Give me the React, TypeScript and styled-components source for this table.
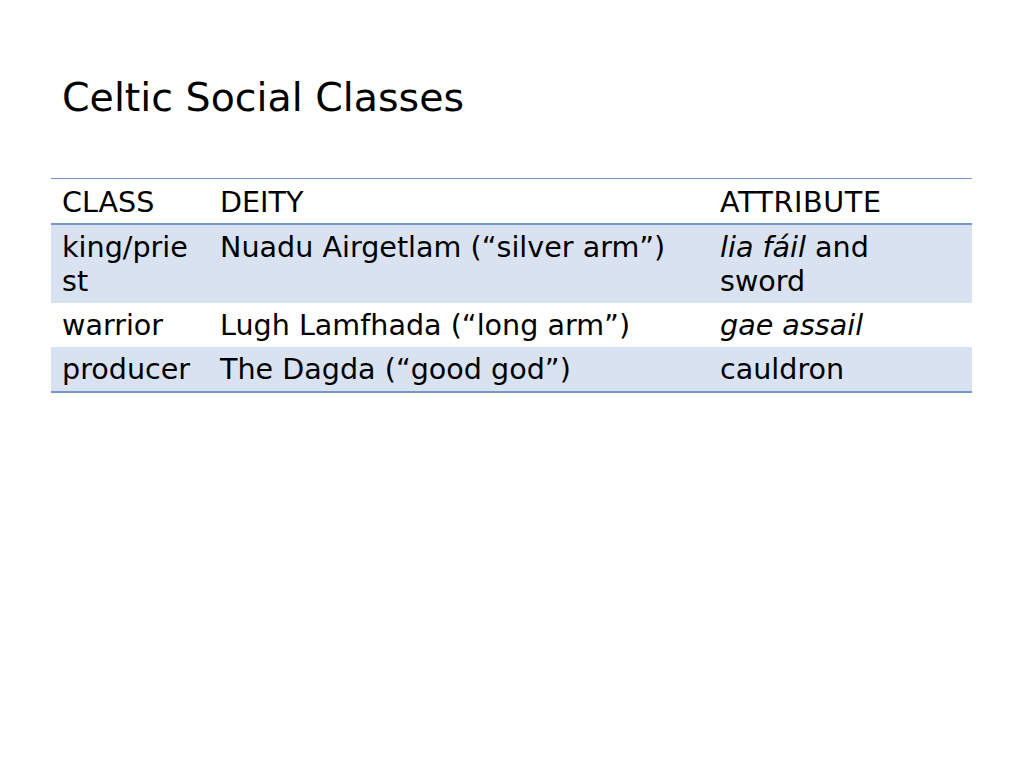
import React from "react";
import styled, { createGlobalStyle } from "styled-components";

type Row = {
    cls: React.ReactNode;
    deity: React.ReactNode;
    attribute: React.ReactNode;
};

const rows: Row[] = [
    {
        cls: "king/priest",
        deity: "Nuadu Airgetlam (\u201csilver arm\u201d)",
        attribute: (
            <>
                <em>lia fáil</em> and sword
            </>
        ),
    },
    {
        cls: "warrior",
        deity: "Lugh Lamfhada (\u201clong arm\u201d)",
        attribute: <em>gae assail</em>,
    },
    {
        cls: "producer",
        deity: "The Dagda (\u201cgood god\u201d)",
        attribute: "cauldron",
    },
];

const App = () => {
    return (
        <>
            <GlobalStyle />
            <SSlide>
                <STitle>Celtic Social Classes</STitle>
                <STable>
                    <colgroup>
                        <col style={{ width: 158 }} />
                        <col style={{ width: 500 }} />
                        <col />
                    </colgroup>
                    <thead>
                        <tr>
                            <SHead>CLASS</SHead>
                            <SHead>DEITY</SHead>
                            <SHead $wide>ATTRIBUTE</SHead>
                        </tr>
                    </thead>
                    <tbody>
                        {rows.map((row, index) => (
                            <SRow key={index} $shaded={index % 2 === 0}>
                                <SCell $breakAll>{row.cls}</SCell>
                                <SCell>{row.deity}</SCell>
                                <SCell>
                                    <SAttr>{row.attribute}</SAttr>
                                </SCell>
                            </SRow>
                        ))}
                    </tbody>
                </STable>
            </SSlide>
        </>
    );
};

const GlobalStyle = createGlobalStyle`
    html, body {
        margin: 0;
        padding: 0;
        background: #ffffff;
    }
    body {
        font-family: "DejaVu Sans", Verdana, sans-serif;
        color: #000000;
    }
`;

const SSlide = styled.div`
    width: 1024px;
    height: 768px;
    box-sizing: border-box;
    padding: 72px 52px 0 51px;
    background: #ffffff;
`;

const STitle = styled.h1`
    margin: 0 0 0 11px;
    font-size: 39.5px;
    font-weight: normal;
    line-height: 50px;
    letter-spacing: 0;
`;

const STable = styled.table`
    margin-top: 56px;
    width: 921px;
    border-collapse: collapse;
    table-layout: fixed;
    font-size: 28.6px;
    line-height: 34px;
    border-top: 1.5px solid #7896cc;
    border-bottom: 2px solid #7896cc;
`;

const SHead = styled.th<{ $wide?: boolean }>`
    text-align: left;
    font-weight: normal;
    padding: 6px 11px 4px;
    border-bottom: 2px solid #7896cc;
    vertical-align: top;
    letter-spacing: ${(p) => (p.$wide ? "0.6px" : "0")};
`;

const SRow = styled.tr<{ $shaded: boolean }>`
    background: ${(p) => (p.$shaded ? "#d9e2f1" : "#ffffff")};
`;

const SCell = styled.td<{ $breakAll?: boolean }>`
    padding: 5px 11px 5px;
    vertical-align: top;
    word-break: ${(p) => (p.$breakAll ? "break-all" : "normal")};
`;

const SAttr = styled.span`
    display: block;
    max-width: 220px;
`;

export default App;
